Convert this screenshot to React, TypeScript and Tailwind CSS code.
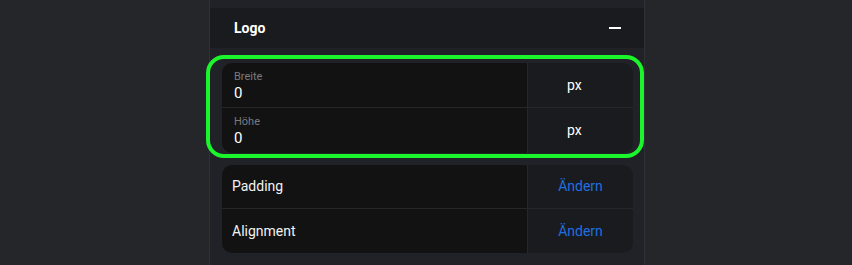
import React from "react";

function DimRow({ label, top }: { label: string; top?: boolean }) {
  return (
    <div className={`flex h-[45px] ${top ? "border-b border-[#262729]" : ""}`}>
      <div className="flex-1 bg-[#121213] pl-[12px] pt-[7px]">
        <div className="text-[11px] leading-[14px] text-[#7a7b7d]">{label}</div>
        <div className="text-[15px] leading-[18px] text-white">0</div>
      </div>
      <div className="w-[106px] border-l border-[#262729] bg-[#1a1b1e] flex items-center pl-[39px] text-[14px] text-white">
        px
      </div>
    </div>
  );
}

function ActionRow({ label, top }: { label: string; top?: boolean }) {
  return (
    <div className={`flex h-[44px] ${top ? "border-b border-[#262729]" : ""}`}>
      <div className="flex-1 bg-[#121213] pl-[10px] flex items-center text-[14px] text-[#f2f2f2]">
        {label}
      </div>
      <div className="w-[106px] border-l border-[#262729] bg-[#1a1b1e] flex items-center justify-center text-[14px] text-[#1f6fe0]">
        Ändern
      </div>
    </div>
  );
}

export default function App() {
  return (
    <div
      className="w-[852px] h-[265px] overflow-hidden bg-[#25262a]"
      style={{ fontFamily: "Roboto, 'Noto Sans', sans-serif" }}
    >
      <div className="relative ml-[209px] w-[436px] h-[265px] border-x border-[#2f3136] bg-[#202227] pt-[8px]">
        <div className="h-[40px] bg-[#1a1b1e] flex items-center justify-between pl-[24px] pr-[23px]">
          <span className="text-[14px] font-bold text-white">Logo</span>
          <span className="block w-[12px] h-[2px] bg-white" />
        </div>
        <div className="pl-[12px] pr-[11px] pt-[15px] flex flex-col gap-[12px]">
          <div className="rounded-[10px] overflow-hidden">
            <DimRow label="Breite" top />
            <DimRow label="Höhe" />
          </div>
          <div className="rounded-[10px] overflow-hidden">
            <ActionRow label="Padding" top />
            <ActionRow label="Alignment" />
          </div>
        </div>
        <div className="absolute left-[-4px] top-[55px] w-[438px] h-[103px] rounded-[18px] border-[4px] border-[#1bf52c] pointer-events-none" />
      </div>
    </div>
  );
}
